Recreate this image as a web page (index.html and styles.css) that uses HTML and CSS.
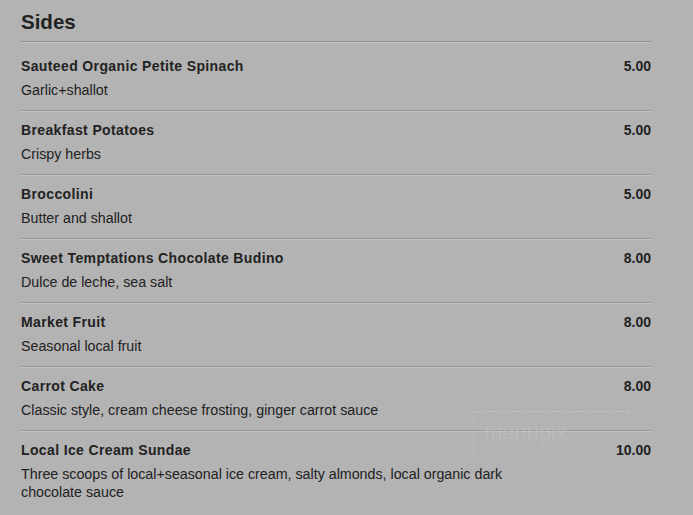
FILE: index.html
```html
<!DOCTYPE html>
<html>
<head>
<meta charset="utf-8">
<link rel="stylesheet" href="styles.css">
</head>
<body>
<div class="menu">
  <h2 class="title">Sides</h2>
  <div class="item">
    <div class="head"><span class="name">Sauteed Organic Petite Spinach</span><span class="price">5.00</span></div>
    <div class="desc">Garlic+shallot</div>
  </div>
  <div class="item">
    <div class="head"><span class="name">Breakfast Potatoes</span><span class="price">5.00</span></div>
    <div class="desc">Crispy herbs</div>
  </div>
  <div class="item">
    <div class="head"><span class="name">Broccolini</span><span class="price">5.00</span></div>
    <div class="desc">Butter and shallot</div>
  </div>
  <div class="item">
    <div class="head"><span class="name">Sweet Temptations Chocolate Budino</span><span class="price">8.00</span></div>
    <div class="desc">Dulce de leche, sea salt</div>
  </div>
  <div class="item">
    <div class="head"><span class="name">Market Fruit</span><span class="price">8.00</span></div>
    <div class="desc">Seasonal local fruit</div>
  </div>
  <div class="item">
    <div class="head"><span class="name">Carrot Cake</span><span class="price">8.00</span></div>
    <div class="desc">Classic style, cream cheese frosting, ginger carrot sauce</div>
  </div>
  <div class="item last">
    <div class="head"><span class="name">Local Ice Cream Sundae</span><span class="price">10.00</span></div>
    <div class="desc">Three scoops of local+seasonal ice cream, salty almonds, local organic dark chocolate sauce</div>
  </div>
  <div class="watermark">menupix</div>
</div>
</body>
</html>
```

FILE: styles.css
```css
html, body {
  margin: 0;
  padding: 0;
  background: #b3b3b3;
}
body {
  font-family: "Liberation Sans", Arial, sans-serif;
  color: #222;
  overflow: hidden;
}
.menu {
  position: relative;
  width: 630px;
  margin-left: 21px;
  padding-top: 9px;
}
.title {
  margin: 0;
  font-size: 20.5px;
  line-height: 26px;
  font-weight: bold;
  padding-bottom: 6px;
  border-bottom: 1px solid #8f8f8f;
  box-shadow: 0 1px 0 #c4c4c4;
  margin-bottom: 14px;
}
.item {
  padding: 8px 0 11px;
  border-bottom: 1px solid #999;
  box-shadow: 0 1px 0 #c2c2c2;
  margin-bottom: 1px;
}
.menu .title + .item {
  padding-top: 0;
}
.item.last {
  border-bottom: none;
  box-shadow: none;
}
.head {
  display: flex;
  justify-content: space-between;
  align-items: center;
  height: 20px;
}
.name {
  font-size: 14px;
  font-weight: bold;
  letter-spacing: 0.37px;
}
.price {
  font-size: 14px;
  font-weight: bold;
}
.desc {
  margin-top: 5px;
  font-size: 14.25px;
  line-height: 18px;
  max-width: 520px;
}
.watermark {
  position: absolute;
  left: 452px;
  top: 411px;
  width: 156px;
  height: 48px;
  border-top: 1px dashed #d0d0d0;
  border-left: 1px dashed #c8c8c8;
  color: #c0c0c0;
  font-size: 22px;
  padding: 8px 0 0 10px;
  box-sizing: border-box;
  opacity: 0.6;
}
```
